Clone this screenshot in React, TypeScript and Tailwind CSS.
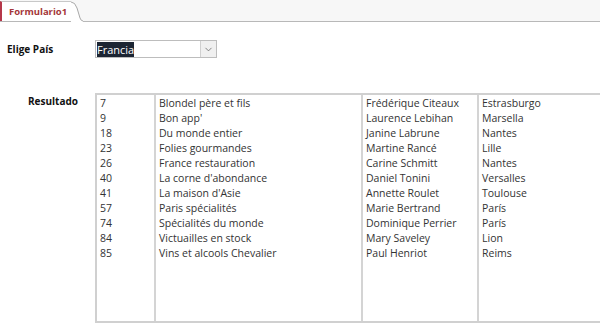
import { ChevronDown } from 'lucide-react';

const rows: [string, string, string, string][] = [
  ['7', 'Blondel père et fils', 'Frédérique Citeaux', 'Estrasburgo'],
  ['9', "Bon app'", 'Laurence Lebihan', 'Marsella'],
  ['18', 'Du monde entier', 'Janine Labrune', 'Nantes'],
  ['23', 'Folies gourmandes', 'Martine Rancé', 'Lille'],
  ['26', 'France restauration', 'Carine Schmitt', 'Nantes'],
  ['40', "La corne d'abondance", 'Daniel Tonini', 'Versalles'],
  ['41', "La maison d'Asie", 'Annette Roulet', 'Toulouse'],
  ['57', 'Paris spécialités', 'Marie Bertrand', 'París'],
  ['74', 'Spécialités du monde', 'Dominique Perrier', 'París'],
  ['84', 'Victuailles en stock', 'Mary Saveley', 'Lion'],
  ['85', 'Vins et alcools Chevalier', 'Paul Henriot', 'Reims'],
];

const Column = ({ items, width, last }: { items: string[]; width: string; last?: boolean }) => (
  <div className={`${width} shrink-0 pl-[3px] pt-[1px] ${last ? '' : 'border-r-2 border-[#d4d4d4]'}`}>
    {items.map((item, i) => (
      <div key={i} className="h-[15px] leading-[15px] whitespace-nowrap">
        {item}
      </div>
    ))}
  </div>
);

export default function App() {
  return (
    <div
      className="w-[600px] h-[332px] overflow-hidden bg-white text-[#333] text-[10.5px]"
      style={{ fontFamily: '"Open Sans", "Liberation Sans", sans-serif' }}
    >
      {/* tab strip */}
      <div className="flex h-[22px] bg-[#f7f7f7] border-b border-[#b8b8b8]">
        <div className="relative flex items-end">
          <div className="h-[20px] mt-[2px] pl-[7px] pr-[4px] bg-white border-t border-l-2 border-t-[#c8c8c8] border-l-[#b5374a] text-[9.5px] font-bold text-[#a4373a] leading-[19px]">
            Formulario1
          </div>
          <svg width="12" height="22" viewBox="0 0 12 22" className="-mb-[1px]">
            <path d="M0 2 Q4 2 6 8 L9 18 Q10 21 12 21 L12 22 L0 22 Z" fill="#fff" />
            <path d="M0 2 Q4 2 6 8 L9 18 Q10 21 12 21" fill="none" stroke="#a8a8a8" strokeWidth="1" />
          </svg>
        </div>
      </div>

      {/* country picker */}
      <div className="flex items-center mt-[18px] h-[18px]">
        <div className="w-[95px] shrink-0 pl-[7px] font-bold text-[#111] text-[10px]">Elige País</div>
        <div className="flex items-center w-[122px] h-[18px] border border-[#bdbdbd] bg-white">
          <span className="ml-[1px] h-[15px] leading-[15px] bg-[#1c2533] text-white text-[11px]">Francia</span>
          <div className="flex-1" />
          <div className="w-[16px] h-[16px] flex items-center justify-center bg-[#f0f0f0] border-l border-[#d0d0d0]">
            <ChevronDown size={11} strokeWidth={1.5} color="#555" />
          </div>
        </div>
      </div>

      {/* results */}
      <div className="flex mt-[35px]">
        <div className="w-[95px] shrink-0 pl-[28px] pt-[1px] font-bold text-[#111] text-[10px]">Resultado</div>
        <div className="flex h-[230px] w-[560px] border-t-2 border-l-2 border-b-2 border-[#d0d0d0] shrink-0">
          <Column items={rows.map((r) => r[0])} width="w-[59px]" />
          <Column items={rows.map((r) => r[1])} width="w-[207px]" />
          <Column items={rows.map((r) => r[2])} width="w-[116px]" />
          <Column items={rows.map((r) => r[3])} width="w-[170px]" last />
        </div>
      </div>
    </div>
  );
}
